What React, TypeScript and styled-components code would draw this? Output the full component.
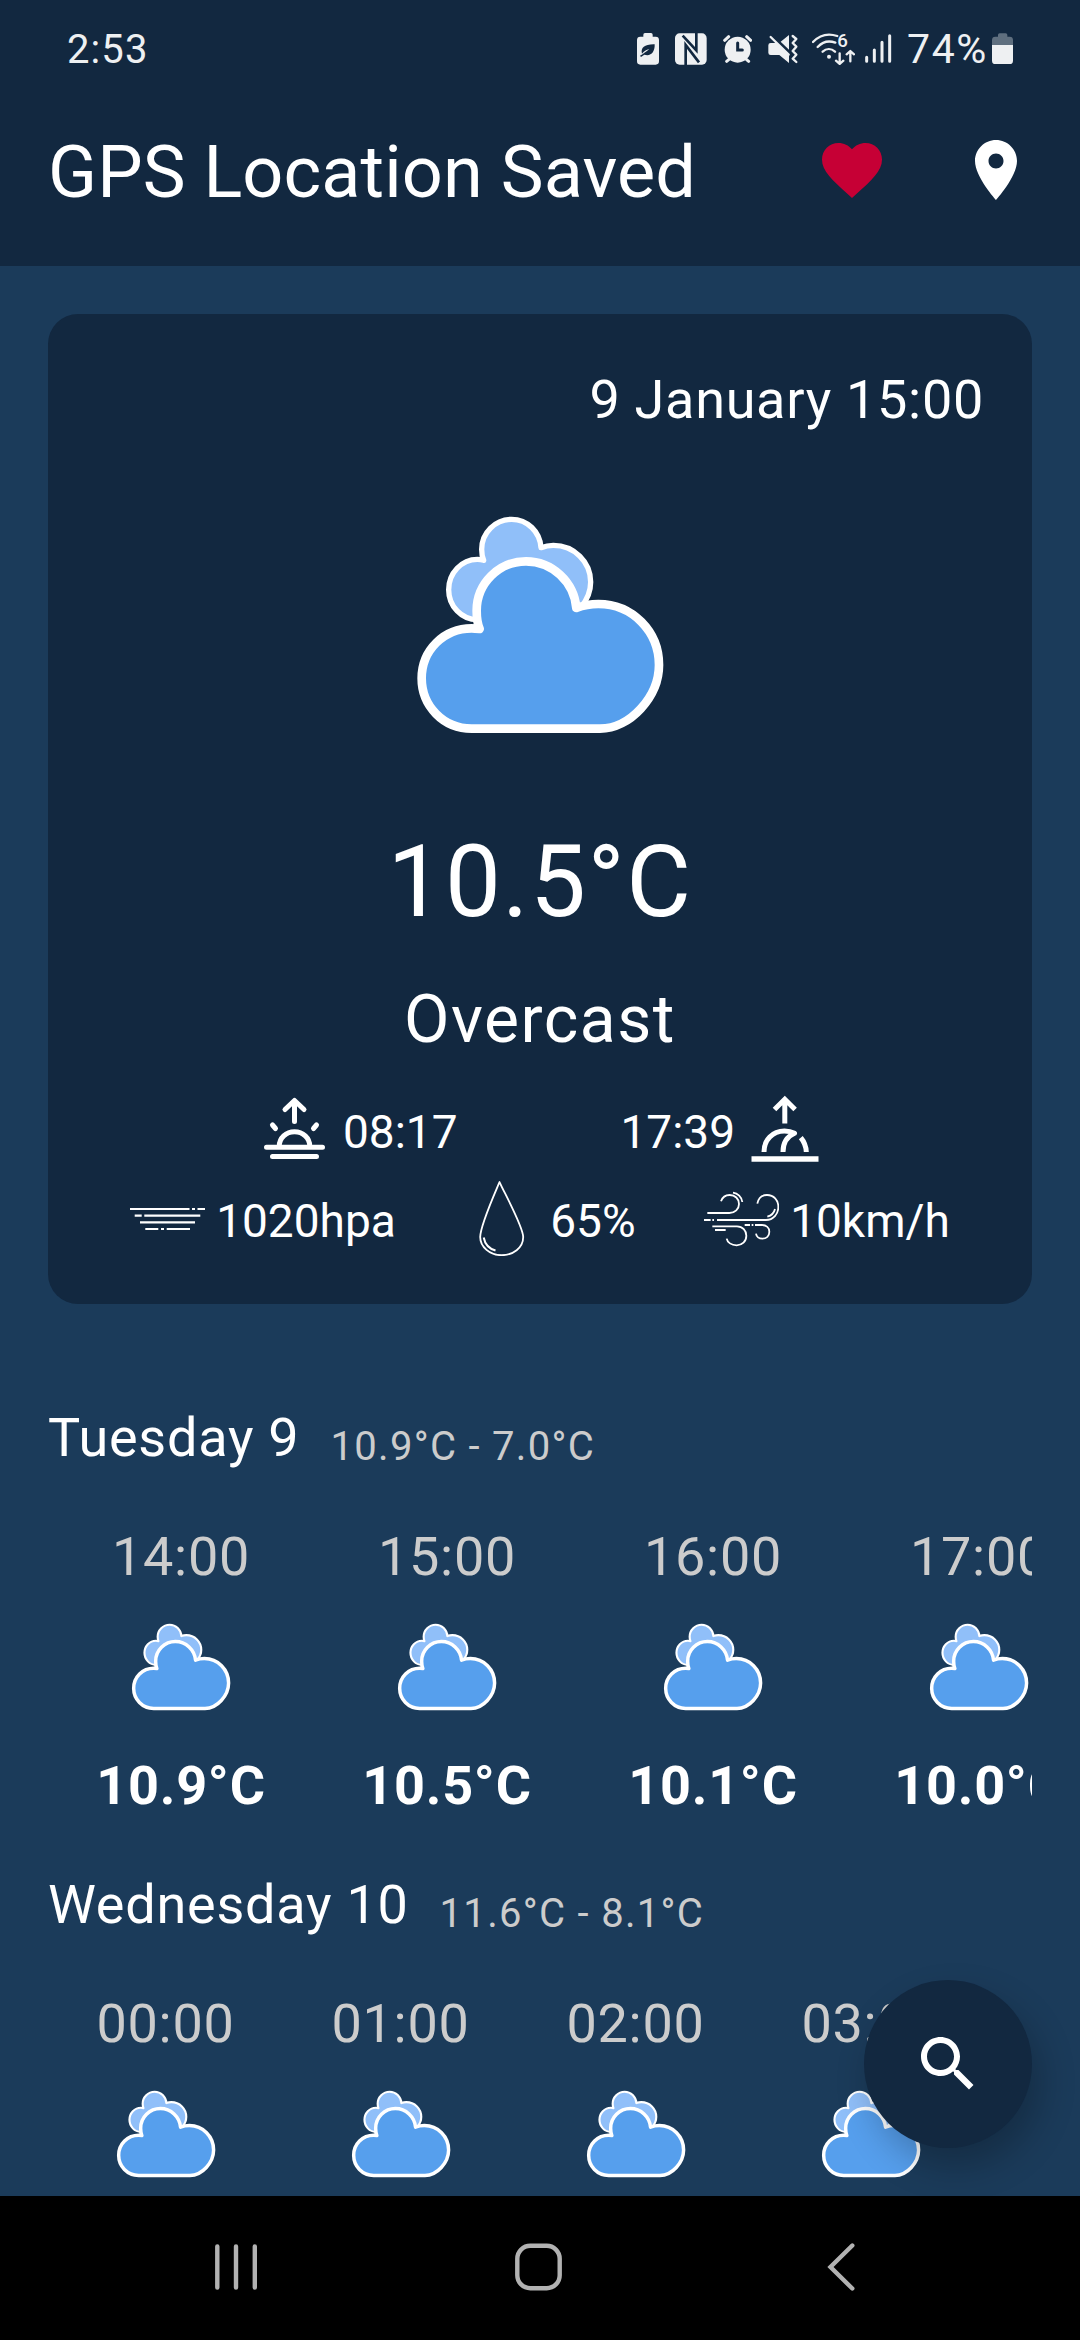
import React from "react";
import styled, { createGlobalStyle } from "styled-components";

const color = {
  dark: "#122840",
  base: "#1b3b5a",
  text: "#ffffff",
  muted: "#cccccc",
  status: "#eef0f2",
  nav: "#b2b2b2",
  heart: "#c60035",
  cloudFront: "#569fed",
  cloudBack: "#90bff9",
};

const GlobalStyle = createGlobalStyle`
  html, body { margin: 0; padding: 0; background: #000; }
  * { box-sizing: border-box; }
`;

const Screen = styled.div`
  width: 1080px;
  height: 2340px;
  display: flex;
  flex-direction: column;
  overflow: hidden;
  position: relative;
  background: ${color.base};
  color: ${color.text};
  font-family: Roboto, "Noto Sans", sans-serif;
`;

const Header = styled.header`
  flex: none;
  height: 266px;
  background: ${color.dark};
`;

const StatusBar = styled.div`
  height: 98px;
  padding: 0 67px;
  display: flex;
  align-items: center;
  justify-content: space-between;
  color: ${color.status};
  font-size: 40px;
  line-height: 97px;
`;

const Clock = styled.span`
  letter-spacing: 1.1px;
`;

const StatusIcons = styled.div`
  display: flex;
  align-items: center;
  gap: 16px;
`;

const Network = styled.div`
  display: flex;
  align-items: center;
  gap: 10px;
  margin-left: -2px;
`;

const Battery = styled.div`
  display: flex;
  align-items: center;
  gap: 4px;
  margin-left: -1px;
`;

const BatteryText = styled.span`
  font-size: 41px;
  letter-spacing: 1.6px;
`;

const AppBar = styled.div`
  display: flex;
  align-items: flex-start;
  padding: 36px 48px 0;
`;

const Title = styled.h1`
  margin: 0;
  flex: 1;
  font-size: 72px;
  font-weight: 400;
  line-height: 78px;
  letter-spacing: 0.1px;
  white-space: nowrap;
`;

const Actions = styled.div`
  display: flex;
  gap: 72px;
`;

const Glyph = styled.svg<{ $w: number; $h?: number }>`
  display: block;
  flex: none;
  width: ${(p) => p.$w}px;
  height: ${(p) => p.$h ?? p.$w}px;
`;

const Main = styled.main`
  flex: 1;
  min-height: 0;
  overflow: hidden;
  padding: 48px 48px 0;
`;

const Card = styled.section`
  height: 990px;
  border-radius: 30px;
  background: ${color.dark};
  padding: 46px 48px 0;
  display: flex;
  flex-direction: column;
  align-items: center;
`;

const CardDate = styled.div`
  align-self: flex-end;
  font-size: 54px;
  line-height: 80px;
  letter-spacing: 0.7px;
  margin-bottom: 50px;
`;

const Temperature = styled.div`
  margin-top: 64px;
  font-size: 99.5px;
  line-height: 116px;
  letter-spacing: 1.5px;
`;

const Condition = styled.div`
  margin-top: 40px;
  font-size: 66px;
  line-height: 80px;
  letter-spacing: 1.5px;
`;

const Metrics = styled.div<{ $gap: number; $top: number }>`
  display: flex;
  justify-content: center;
  gap: ${(p) => p.$gap}px;
  margin-top: ${(p) => p.$top}px;
`;

const Metric = styled.div<{ $gap?: number }>`
  display: flex;
  gap: ${(p) => p.$gap ?? 11}px;
  font-size: 46px;
  line-height: 72px;
`;

const MetricText = styled.span`
  padding-top: 4px;
  white-space: nowrap;
`;

const Days = styled.div`
  margin-top: 94px;
  display: flex;
  flex-direction: column;
  gap: 39px;
`;

const Day = styled.section`
  display: flex;
  flex-direction: column;
  gap: 39px;
`;

const DayHeader = styled.header`
  display: flex;
  gap: 31px;
  height: 80px;
`;

const DayName = styled.h2`
  margin: 0;
  font-size: 54px;
  font-weight: 400;
  line-height: 80px;
  letter-spacing: 0.75px;
`;

const DayRange = styled.span`
  padding-top: 9px;
  font-size: 40px;
  line-height: 80px;
  letter-spacing: 1.3px;
  color: ${color.muted};
`;

const Hours = styled.div`
  display: flex;
  overflow: hidden;
`;

const Hour = styled.div<{ $width: number }>`
  flex: none;
  width: ${(p) => p.$width}px;
  display: flex;
  flex-direction: column;
  align-items: center;
  font-size: 54px;
  line-height: 80px;
  letter-spacing: 0.75px;
`;

const HourTime = styled.span`
  color: ${color.muted};
  margin-bottom: 16px;
`;

const HourTemp = styled.strong`
  margin-top: 25px;
  font-weight: 700;
`;

const SearchButton = styled.button`
  position: absolute;
  right: 48px;
  bottom: 192px;
  width: 168px;
  height: 168px;
  padding: 0;
  border: 0;
  border-radius: 50%;
  display: grid;
  place-items: center;
  background: ${color.dark};
  box-shadow: 8px 18px 36px rgba(0, 0, 0, 0.24);
`;

const NavBar = styled.nav`
  position: relative;
  flex: none;
  height: 144px;
  background: #000;
  display: flex;
  align-items: center;
  justify-content: space-between;
  padding: 0 212px 2px 209px;
`;

function CloudIcon({ width }: { width: number }) {
  return (
    <Glyph $w={width} $h={width * 0.9} viewBox="0 0 900 810" stroke="#fff" strokeLinejoin="round">
      <path
        d="M262 389C215 389 176 349 176 299C176 249 215 208 262 208C268 208 275 209 281 211C277 202 275 190 275 178C275 128 316 88 365 88C412 88 450 125 453 173C466 168 478 166 490 166C552 166 602 215 602 276C602 302 592 328 574 350Z"
        fill={color.cloudBack}
        strokeWidth="16"
      />
      <path
        d="M245 716C160 716 95 648 95 565C95 480 162 415 245 415C253 415 261 416 269 417C262 400 260 380 260 362C260 280 327 214 408 214C487 214 552 276 559 354C580 346 602 342 625 342C727 342 807 424 807 525C807 620 720 716 630 716Z"
        fill={color.cloudFront}
        strokeWidth="26"
      />
    </Glyph>
  );
}

const EcoBatteryIcon = () => (
  <Glyph $w={22} $h={32} viewBox="78 36 66 96" fill={color.status}>
    <path d="M97 47V41Q97 36 102 36H120Q125 36 125 41V47H134Q144 47 144 57V121Q144 131 134 131H88Q78 131 78 121V57Q78 47 88 47Z" />
    <path d="M93 98C88 80 102 69 131 70C132 94 119 107 100 101L90 108L87 104C98 98 105 92 115 84C105 87 99 91 93 98Z" fill={color.dark} />
  </Glyph>
);

const NfcIcon = () => (
  <Glyph $w={32} $h={32} viewBox="194 36 96 96" fill="none">
    <rect x="194" y="37" width="95" height="94" rx="14" fill={color.status} />
    <path d="M217 44L258 88V36M226 132V72L266 124" stroke={color.dark} strokeWidth="8" />
  </Glyph>
);

const AlarmIcon = () => (
  <Glyph $w={29} $h={32} viewBox="336 36 87 96" fill="none" stroke={color.status} strokeWidth="9" strokeLinecap="round">
    <circle cx="380" cy="86" r="39" fill={color.status} stroke="none" />
    <path d="M341 58L353 47M407 47L419 58M347 121L354 115M406 115L413 121" />
    <path d="M380 66V87H394" stroke={color.dark} />
  </Glyph>
);

const MuteIcon = () => (
  <Glyph $w={30} $h={32} viewBox="470 36 90 96" fill={color.status}>
    <path d="M478 66H495L533 103V126L504 102H478Q471 102 471 95V73Q471 66 478 66ZM508 62L533 42V86Z" />
    <path d="M478 48L532 101" stroke={color.status} strokeWidth="7" strokeLinecap="round" />
    <path d="M544 45L555 54L544 66L555 77L544 90L555 101L544 113L555 123" fill="none" stroke={color.status} strokeWidth="7" strokeLinecap="round" strokeLinejoin="round" />
  </Glyph>
);

const WifiIcon = () => (
  <Glyph $w={43} $h={32} viewBox="604 36 129 96" fill="none" stroke={color.status} strokeWidth="7" strokeLinecap="round" strokeLinejoin="round">
    <path d="M607 63C626 43 653 36 680 45M621 78C636 62 655 58 674 65M636 92C647 82 662 82 673 92" />
    <circle cx="655" cy="107" r="6" fill={color.status} stroke="none" />
    <path d="M687 97V128M676 119L687 129L698 119M719 121V91M708 100L719 90L730 100" />
    <text x="680" y="79" fontSize="56" fontWeight="500" fill={color.status} stroke="none">6</text>
  </Glyph>
);

const SignalIcon = () => (
  <Glyph $w={27} $h={32} viewBox="763 36 81 96" stroke={color.status} strokeWidth="9" strokeLinecap="round">
    <path d="M768 109V121M791 87V121M814 64V121M837 44V121" />
  </Glyph>
);

const BatteryLevelIcon = () => (
  <Glyph $w={21} $h={32} viewBox="1146 36 63 96">
    <path d="M1164 47V42Q1164 37 1169 37H1187Q1192 37 1192 42V47H1199Q1209 47 1209 57V72H1146V57Q1146 47 1156 47Z" fill="#5f6f7f" />
    <path d="M1146 72H1209V119Q1209 129 1199 129H1156Q1146 129 1146 119Z" fill={color.status} />
  </Glyph>
);

const HeartIcon = () => (
  <Glyph $w={72} viewBox="0 0 24 24" fill={color.heart}>
    <path d="M12 21.35l-1.45-1.32C5.4 15.36 2 12.28 2 8.5 2 5.42 4.42 3 7.5 3c1.74 0 3.41.81 4.5 2.09C13.09 3.81 14.76 3 16.5 3 19.58 3 22 5.42 22 8.5c0 3.78-3.4 6.86-8.55 11.54L12 21.35z" />
  </Glyph>
);

const PlaceIcon = () => (
  <Glyph $w={72} viewBox="0 0 24 24" fill="#fff">
    <path d="M12 2C8.13 2 5 5.13 5 9c0 5.25 7 13 7 13s7-7.75 7-13c0-3.87-3.13-7-7-7zm0 9.5c-1.38 0-2.5-1.12-2.5-2.5s1.12-2.5 2.5-2.5 2.5 1.12 2.5 2.5-1.12 2.5-2.5 2.5z" />
  </Glyph>
);

const SearchIcon = () => (
  <Glyph $w={72} viewBox="0 0 24 24" fill="#fff">
    <path d="M15.5 14h-.79l-.28-.27C15.41 12.59 16 11.11 16 9.5 16 5.91 13.09 3 9.5 3S3 5.91 3 9.5 5.91 16 9.5 16c1.61 0 3.09-.59 4.23-1.57l.27.28v.79l5 4.99L20.49 19l-4.99-5zm-6 0C7.01 14 5 11.99 5 9.5S7.01 5 9.5 5 14 7.01 14 9.5 11.99 14 9.5 14z" />
  </Glyph>
);

const SunriseIcon = () => (
  <Glyph $w={72} viewBox="259 1092 72 72" fill="none" stroke="#fff" strokeWidth="5" strokeLinecap="round" strokeLinejoin="round">
    <path d="M294.5 1102V1121.5M285 1109.5L294.5 1100.5L304 1109.5" />
    <path d="M279.3 1146C279.3 1138 286 1131.7 294.5 1131.7C303 1131.7 309.7 1138 309.7 1146" />
    <path d="M266.5 1147.3H322.5M272.5 1156.6H316.5M272.5 1125L275.5 1128.5M316.5 1125L313.5 1128.5" />
  </Glyph>
);

const SunsetIcon = () => (
  <Glyph $w={72} viewBox="749.5 1092 72 72" fill="none" stroke="#fff" strokeWidth="5">
    <path d="M785.3 1100V1123.5M775 1109.5L785.3 1099.2L795.6 1109.5" />
    <path d="M764.5 1152C764.5 1140 773 1131 785 1131C788.5 1131 792 1131.7 795 1133.3C787.5 1136.5 783.5 1143 783.5 1152" strokeLinejoin="round" />
    <path d="M801.3 1137.6C804.5 1141.5 806.6 1146.5 806.8 1152" />
    <path d="M752 1159H819" strokeWidth="5.6" />
  </Glyph>
);

const PressureIcon = () => (
  <Glyph $w={75} viewBox="130 1181 75 75" fill="none" stroke="#fff" strokeWidth="2.2">
    <path d="M130 1209H189.5M192 1209H195M197.5 1209H205M134.7 1215.6H141.7M144.3 1215.6H200.3M140 1222.4H195M145.3 1229H158.3M161 1229H164M166.7 1229H190" />
  </Glyph>
);

const DropIcon = () => (
  <Glyph $w={75} viewBox="464 1181 75 75" fill="none" stroke="#fff" strokeWidth="1.8" strokeLinejoin="round">
    <path d="M499.5 1182C494 1195 480.2 1226 480.2 1237C480.2 1247 490 1255.2 501.5 1255.2C513 1255.2 523.2 1248 523.2 1237C523.2 1227 505 1194 499.5 1182Z" />
    <path d="M483.7 1237.5C485 1244.5 489 1248.7 495.5 1250.5" strokeWidth="2" />
  </Glyph>
);

const WindIcon = () => (
  <Glyph $w={75} viewBox="432 63 225 225" fill="none" stroke="#fff" strokeWidth="5.4">
    <path d="M442 159H508C525 159 537 147 537 132C537 116 525 105 509 105C496 105 487 112 483 124M519 98C533 100 545 111 547 126" />
    <path d="M432 180H452M457 180H462M471 180H618C640 180 655 162 655 141C655 120 641 105 621 105C606 105 595 115 592 131M645 147C642 160 634 167 622 170" />
    <path d="M457 199H531C548 199 559 212 559 227C559 244 546 256 530 256C514 256 502 247 500 236M465 210H497" />
    <path d="M554 195H570M575 195H580M585 195H605C619 195 628 203 628 215C628 228 619 236 607 236C597 236 589 230 588 221" />
  </Glyph>
);

const RecentsIcon = () => (
  <Glyph $w={54} viewBox="209 2240 54 54" stroke={color.nav} strokeWidth="4.4" strokeLinecap="round">
    <path d="M217.3 2246.5V2287.5M236 2246.5V2287.5M254.8 2246.5V2287.5" />
  </Glyph>
);

const HomeIcon = () => (
  <Glyph $w={54} viewBox="511.5 2240 54 54" fill="none" stroke={color.nav} strokeWidth="4.4">
    <rect x="516.8" y="2245.8" width="42.4" height="42.4" rx="13" />
  </Glyph>
);

const BackIcon = () => (
  <Glyph $w={54} viewBox="814 2240 54 54" fill="none" stroke={color.nav} strokeWidth="4.4" strokeLinecap="round">
    <path d="M852.3 2245.5L830.5 2267L852.3 2288.5" />
  </Glyph>
);

const days = [
  {
    name: "Tuesday 9",
    range: "10.9°C - 7.0°C",
    width: 266,
    hours: [
      ["14:00", "10.9°C"],
      ["15:00", "10.5°C"],
      ["16:00", "10.1°C"],
      ["17:00", "10.0°C"],
    ],
  },
  {
    name: "Wednesday 10",
    range: "11.6°C - 8.1°C",
    width: 235,
    hours: [
      ["00:00", "8.5°C"],
      ["01:00", "8.4°C"],
      ["02:00", "8.2°C"],
      ["03:00", "8.1°C"],
    ],
  },
];

export default function App() {
  return (
    <Screen>
      <GlobalStyle />
      <Header>
        <StatusBar>
          <Clock>2:53</Clock>
          <StatusIcons>
            <EcoBatteryIcon />
            <NfcIcon />
            <AlarmIcon />
            <MuteIcon />
            <Network>
              <WifiIcon />
              <SignalIcon />
            </Network>
            <Battery>
              <BatteryText>74%</BatteryText>
              <BatteryLevelIcon />
            </Battery>
          </StatusIcons>
        </StatusBar>
        <AppBar>
          <Title>GPS Location Saved</Title>
          <Actions>
            <HeartIcon />
            <PlaceIcon />
          </Actions>
        </AppBar>
      </Header>

      <Main>
        <Card>
          <CardDate>9 January 15:00</CardDate>
          <CloudIcon width={300} />
          <Temperature>10.5°C</Temperature>
          <Condition>Overcast</Condition>
          <Metrics $gap={163} $top={32}>
            <Metric $gap={12}>
              <SunriseIcon />
              <MetricText>08:17</MetricText>
            </Metric>
            <Metric $gap={14}>
              <MetricText>17:39</MetricText>
              <SunsetIcon />
            </Metric>
          </Metrics>
          <Metrics $gap={68.5} $top={13}>
            <Metric>
              <PressureIcon />
              <MetricText>1020hpa</MetricText>
            </Metric>
            <Metric>
              <DropIcon />
              <MetricText>65%</MetricText>
            </Metric>
            <Metric>
              <WindIcon />
              <MetricText>10km/h</MetricText>
            </Metric>
          </Metrics>
        </Card>

        <Days>
          {days.map((day) => (
            <Day key={day.name}>
              <DayHeader>
                <DayName>{day.name}</DayName>
                <DayRange>{day.range}</DayRange>
              </DayHeader>
              <Hours>
                {day.hours.map(([time, temp]) => (
                  <Hour key={time} $width={day.width}>
                    <HourTime>{time}</HourTime>
                    <CloudIcon width={120} />
                    <HourTemp>{temp}</HourTemp>
                  </Hour>
                ))}
              </Hours>
            </Day>
          ))}
        </Days>
      </Main>

      <NavBar>
        <RecentsIcon />
        <HomeIcon />
        <BackIcon />
      </NavBar>
      <SearchButton aria-label="Search">
        <SearchIcon />
      </SearchButton>
    </Screen>
  );
}
